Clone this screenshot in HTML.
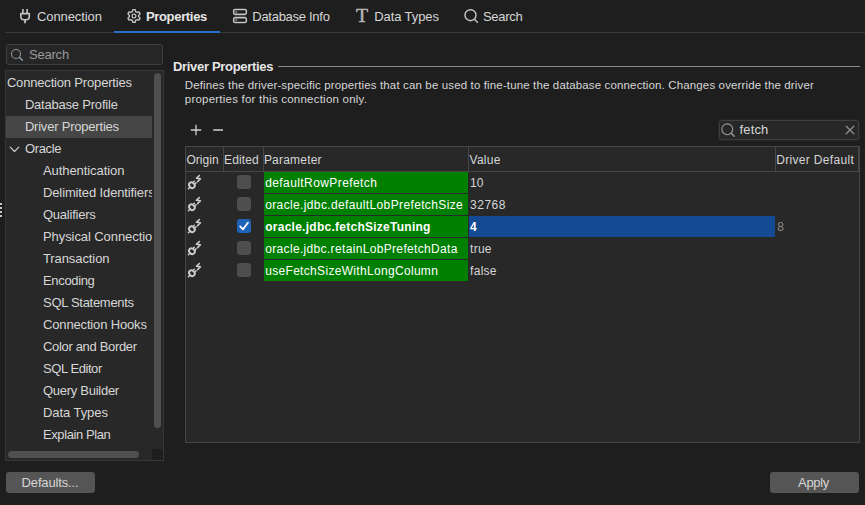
<!DOCTYPE html>
<html lang="en"><head><meta charset="utf-8"><title>Driver Properties</title>
<style>
html,body{margin:0;padding:0;background:#1e1e1e;}
body{width:865px;height:505px;position:relative;overflow:hidden;font-family:"Liberation Sans",sans-serif;}
.t{position:absolute;white-space:pre;line-height:16px;height:16px;}
.b{position:absolute;box-sizing:border-box;}
svg{position:absolute;overflow:visible;}
</style></head><body>
<!-- tab bar -->
<div class="b" style="left:5px;top:32px;width:860px;height:1px;background:#3a3a3a"></div>
<div class="b" style="left:114px;top:31px;width:106px;height:2px;background:#2472c8"></div>
<!-- left search -->
<div class="b" style="left:6px;top:44px;width:157px;height:21px;border:1px solid #3f3f3f;border-radius:3px;background:#262626"></div>
<!-- tree -->
<div class="b" style="left:5px;top:70px;width:159px;height:391px;border:1px solid #363636;background:#282828"></div>
<div class="b" style="left:6px;top:116px;width:146px;height:22px;background:#464646"></div>
<div class="b" style="left:154px;top:73px;width:7px;height:355px;border-radius:3.5px;background:#4f4f4f"></div>
<div class="b" style="left:8px;top:451px;width:131px;height:7px;border-radius:3.5px;background:#4f4f4f"></div>
<div class="b" style="left:152px;top:449px;width:11px;height:11px;background:#1e1e1e"></div>
<!-- sash -->
<div class="b" style="left:0;top:203px;width:2px;height:2px;background:#c8c8c8"></div>
<div class="b" style="left:0;top:207px;width:2px;height:2px;background:#c8c8c8"></div>
<div class="b" style="left:0;top:211px;width:2px;height:2px;background:#c8c8c8"></div>
<div class="b" style="left:0;top:215px;width:2px;height:2px;background:#c8c8c8"></div>
<!-- heading line -->
<div class="b" style="left:278px;top:66px;width:582px;height:1px;background:#8a8a8a"></div>
<!-- filter box -->
<div class="b" style="left:718px;top:119px;width:142px;height:22px;background:#252525"></div>
<div class="b" style="left:719px;top:120px;width:140px;height:20px;border:1px solid #3f3f3f;border-radius:3px;background:#272727"></div>
<!-- table -->
<div class="b" style="left:185px;top:146px;width:675px;height:297px;border:1px solid #464646;background:#282828"></div>
<div class="b" style="left:186px;top:171px;width:673px;height:1px;background:#464646"></div>
<div class="b" style="left:223px;top:147px;width:1px;height:24px;background:#464646"></div>
<div class="b" style="left:263px;top:147px;width:1px;height:24px;background:#464646"></div>
<div class="b" style="left:468px;top:147px;width:1px;height:24px;background:#464646"></div>
<div class="b" style="left:775px;top:147px;width:1px;height:24px;background:#464646"></div>
<div class="b" style="left:858px;top:147px;width:1px;height:24px;background:#464646"></div>
<!-- green cells -->
<div class="b" style="left:264px;top:172px;width:204px;height:109px;background:#262a26"></div>
<div class="b" style="left:264px;top:172px;width:204px;height:21px;background:#008000"></div>
<div class="b" style="left:264px;top:194px;width:204px;height:21px;background:#008000"></div>
<div class="b" style="left:264px;top:216px;width:204px;height:21px;background:#008000"></div>
<div class="b" style="left:264px;top:238px;width:204px;height:21px;background:#008000"></div>
<div class="b" style="left:264px;top:260px;width:204px;height:21px;background:#008000"></div>
<!-- blue selection -->
<div class="b" style="left:469px;top:216px;width:306px;height:21px;background:#144a94"></div>
<!-- checkboxes -->
<div class="b" style="left:237px;top:175px;width:14px;height:14px;border-radius:3px;background:#4e4e4e"></div>
<div class="b" style="left:237px;top:197px;width:14px;height:14px;border-radius:3px;background:#4e4e4e"></div>
<div class="b" style="left:237px;top:219px;width:14px;height:14px;border-radius:3px;background:#1f63b8"></div>
<div class="b" style="left:237px;top:241px;width:14px;height:14px;border-radius:3px;background:#4e4e4e"></div>
<div class="b" style="left:237px;top:263px;width:14px;height:14px;border-radius:3px;background:#4e4e4e"></div>
<svg style="left:237px;top:219px" width="14" height="14" viewBox="0 0 14 14"><path d="M3.2 7.4 L6 10.3 L10.9 3.7" fill="none" stroke="#fff" stroke-width="1.8" stroke-linecap="round" stroke-linejoin="round"/></svg>
<!-- buttons -->
<div class="b" style="left:6px;top:472px;width:89px;height:21px;border-radius:3px;background:#555555"></div>
<div class="b" style="left:770px;top:472px;width:89px;height:21px;border-radius:3px;background:#555555"></div>
<svg width="865" height="505" viewBox="0 0 865 505" style="left:0;top:0">
<g fill="none" stroke="#c4c4c4" stroke-width="1.6"><path d="M22.9 9 V13.4 M27.1 9 V13.4" /><path d="M20.8 13.6 H29.3 V16.2 Q29.3 19.7 26.2 19.7 H23.9 Q20.8 19.7 20.8 16.2 Z" stroke-linejoin="round"/><path d="M25.05 19.7 V23.2" stroke-width="1.8"/></g>
<path d="M132.38 11.54 L132.82 9.66 L135.18 9.66 L135.62 11.54 L137.05 12.36 L138.90 11.81 L140.08 13.85 L138.68 15.18 L138.68 16.82 L140.08 18.15 L138.90 20.19 L137.05 19.64 L135.62 20.46 L135.18 22.34 L132.82 22.34 L132.38 20.46 L130.95 19.64 L129.10 20.19 L127.92 18.15 L129.32 16.82 L129.32 15.18 L127.92 13.85 L129.10 11.81 L130.95 12.36Z" fill="none" stroke="#c4c4c4" stroke-width="1.4" stroke-linejoin="round"/><circle cx="134" cy="16" r="1.9" fill="none" stroke="#c4c4c4" stroke-width="1.2"/>
<rect x="234.5" y="15" width="11" height="2" fill="#484848"/><g fill="none" stroke="#c4c4c4" stroke-width="1.5"><rect x="233.65" y="9.55" width="12.7" height="4.8" rx="1.3"/><rect x="233.65" y="17.65" width="12.7" height="4.8" rx="1.3"/></g><rect x="235.2" y="11" width="2" height="2" fill="#777"/><rect x="235.2" y="19.1" width="2" height="2" fill="#777"/>
<g fill="none" stroke="#c4c4c4" stroke-width="1.4" stroke-linecap="round"><circle cx="470.5" cy="15.2" r="5.5"/><path d="M474.6 19.4 L477.4 22.2"/></g>
<g fill="none" stroke="#8c959c" stroke-width="1.1" stroke-linecap="round"><circle cx="16" cy="54" r="4.5"/><path d="M19.4 57.4 L22.4 60.3" stroke-width="1.5"/></g>
<path d="M10.2 147.2 L14.5 151.5 L18.8 147.2" fill="none" stroke="#d0d0d0" stroke-width="1.1" stroke-linecap="round" stroke-linejoin="round"/>
<path d="M190.8 130 H201.2 M196 124.8 V135.2 M213.2 130 H223" fill="none" stroke="#d0d0d0" stroke-width="1.3"/>
<g fill="none" stroke="#9a9a9a" stroke-width="1.1" stroke-linecap="round"><circle cx="727.3" cy="129.3" r="5.4"/><path d="M731.2 133.3 L734.2 136.3" stroke-width="1.4"/><path d="M846.2 126.2 L853.8 133.8 M853.8 126.2 L846.2 133.8" stroke-width="1.25" stroke="#909090"/></g>
<g transform="translate(0 0)" fill="none" stroke="#cccccc" stroke-linecap="round" stroke-linejoin="round"><ellipse cx="191.9" cy="185.2" rx="2.5" ry="3.1" transform="rotate(-45 191.9 185.2)" stroke-width="1.9"/><path d="M188.4 188.7 L189.6 187.5 M193.2 182.3 L194.3 181.2 M194.9 184 L196 182.9" stroke-width="1.5"/><path d="M199.4 175.5 L196.4 178.3 L200.4 178.8 L197.6 181.6" stroke-width="1.6"/></g>
<g transform="translate(0 22)" fill="none" stroke="#cccccc" stroke-linecap="round" stroke-linejoin="round"><ellipse cx="191.9" cy="185.2" rx="2.5" ry="3.1" transform="rotate(-45 191.9 185.2)" stroke-width="1.9"/><path d="M188.4 188.7 L189.6 187.5 M193.2 182.3 L194.3 181.2 M194.9 184 L196 182.9" stroke-width="1.5"/><path d="M199.4 175.5 L196.4 178.3 L200.4 178.8 L197.6 181.6" stroke-width="1.6"/></g>
<g transform="translate(0 44)" fill="none" stroke="#cccccc" stroke-linecap="round" stroke-linejoin="round"><ellipse cx="191.9" cy="185.2" rx="2.5" ry="3.1" transform="rotate(-45 191.9 185.2)" stroke-width="1.9"/><path d="M188.4 188.7 L189.6 187.5 M193.2 182.3 L194.3 181.2 M194.9 184 L196 182.9" stroke-width="1.5"/><path d="M199.4 175.5 L196.4 178.3 L200.4 178.8 L197.6 181.6" stroke-width="1.6"/></g>
<g transform="translate(0 66)" fill="none" stroke="#cccccc" stroke-linecap="round" stroke-linejoin="round"><ellipse cx="191.9" cy="185.2" rx="2.5" ry="3.1" transform="rotate(-45 191.9 185.2)" stroke-width="1.9"/><path d="M188.4 188.7 L189.6 187.5 M193.2 182.3 L194.3 181.2 M194.9 184 L196 182.9" stroke-width="1.5"/><path d="M199.4 175.5 L196.4 178.3 L200.4 178.8 L197.6 181.6" stroke-width="1.6"/></g>
<g transform="translate(0 88)" fill="none" stroke="#cccccc" stroke-linecap="round" stroke-linejoin="round"><ellipse cx="191.9" cy="185.2" rx="2.5" ry="3.1" transform="rotate(-45 191.9 185.2)" stroke-width="1.9"/><path d="M188.4 188.7 L189.6 187.5 M193.2 182.3 L194.3 181.2 M194.9 184 L196 182.9" stroke-width="1.5"/><path d="M199.4 175.5 L196.4 178.3 L200.4 178.8 L197.6 181.6" stroke-width="1.6"/></g>
</svg>
<span class="t" style="left:355.7px;top:4.9px;transform:scaleX(1.07);transform-origin:0 0;font-family:'Liberation Serif',serif;font-size:18.5px;line-height:22px;height:22px;color:#b8b8b8;-webkit-text-stroke:0.4px #b8b8b8">T</span>
<span class="t" style="left:37.0px;top:8.70px;font-size:13px;letter-spacing:-0.098px;color:#d6d6d6;">Connection</span>
<span class="t" style="left:145.9px;top:8.70px;font-size:13px;letter-spacing:-0.321px;color:#e6e6e6;font-weight:700;">Properties</span>
<span class="t" style="left:252.3px;top:8.70px;font-size:13px;letter-spacing:-0.281px;color:#d6d6d6;">Database Info</span>
<span class="t" style="left:374.2px;top:8.70px;font-size:13px;letter-spacing:-0.083px;color:#d6d6d6;">Data Types</span>
<span class="t" style="left:483.0px;top:8.70px;font-size:13px;letter-spacing:-0.301px;color:#d6d6d6;">Search</span>
<span class="t" style="left:29.1px;top:46.70px;font-size:13px;letter-spacing:-0.234px;color:#9a9a9a;">Search</span>
<span class="t" style="left:6.9px;top:75.20px;font-size:13px;letter-spacing:-0.173px;color:#d6d6d6;">Connection Properties</span>
<span class="t" style="left:24.9px;top:97.20px;font-size:13px;letter-spacing:-0.208px;color:#d6d6d6;">Database Profile</span>
<span class="t" style="left:24.9px;top:119.20px;font-size:13px;letter-spacing:-0.208px;color:#d6d6d6;">Driver Properties</span>
<span class="t" style="left:24.9px;top:141.20px;font-size:13px;letter-spacing:-0.316px;color:#d6d6d6;">Oracle</span>
<span class="t" style="left:43.0px;top:163.20px;font-size:13px;letter-spacing:-0.079px;color:#d6d6d6;">Authentication</span>
<span class="t" style="left:43.0px;top:185.20px;font-size:13px;letter-spacing:-0.126px;color:#d6d6d6;width:108.6px;overflow:hidden;">Delimited Identifiers</span>
<span class="t" style="left:43.0px;top:207.20px;font-size:13px;letter-spacing:-0.242px;color:#d6d6d6;">Qualifiers</span>
<span class="t" style="left:43.0px;top:229.20px;font-size:13px;letter-spacing:-0.079px;color:#d6d6d6;width:108.6px;overflow:hidden;">Physical Connection</span>
<span class="t" style="left:43.0px;top:251.20px;font-size:13px;letter-spacing:-0.094px;color:#d6d6d6;">Transaction</span>
<span class="t" style="left:43.0px;top:273.20px;font-size:13px;letter-spacing:-0.340px;color:#d6d6d6;">Encoding</span>
<span class="t" style="left:43.0px;top:295.20px;font-size:13px;letter-spacing:-0.293px;color:#d6d6d6;">SQL Statements</span>
<span class="t" style="left:43.0px;top:317.20px;font-size:13px;letter-spacing:-0.152px;color:#d6d6d6;">Connection Hooks</span>
<span class="t" style="left:43.0px;top:339.20px;font-size:13px;letter-spacing:-0.331px;color:#d6d6d6;">Color and Border</span>
<span class="t" style="left:43.0px;top:361.20px;font-size:13px;letter-spacing:-0.431px;color:#d6d6d6;">SQL Editor</span>
<span class="t" style="left:43.0px;top:383.20px;font-size:13px;letter-spacing:-0.276px;color:#d6d6d6;">Query Builder</span>
<span class="t" style="left:43.0px;top:405.20px;font-size:13px;letter-spacing:-0.063px;color:#d6d6d6;">Data Types</span>
<span class="t" style="left:43.0px;top:427.20px;font-size:13px;letter-spacing:-0.407px;color:#d6d6d6;">Explain Plan</span>
<span class="t" style="left:172.9px;top:58.70px;font-size:13px;letter-spacing:-0.306px;color:#e6e6e6;font-weight:700;">Driver Properties</span>
<span class="t" style="left:184.8px;top:77.32px;font-size:11.5px;letter-spacing:0.138px;color:#d6d6d6;">Defines the driver-specific properties that can be used to fine-tune the database connection. Changes override the driver</span>
<span class="t" style="left:184.8px;top:90.92px;font-size:11.5px;letter-spacing:0.222px;color:#d6d6d6;">properties for this connection only.</span>
<span class="t" style="left:739.5px;top:121.70px;font-size:13px;letter-spacing:0.143px;color:#d6d6d6;">fetch</span>
<span class="t" style="left:186.5px;top:151.74px;font-size:12px;letter-spacing:0.014px;color:#d6d6d6;">Origin</span>
<span class="t" style="left:224.1px;top:151.74px;font-size:12px;letter-spacing:0.128px;color:#d6d6d6;">Edited</span>
<span class="t" style="left:263.9px;top:151.74px;font-size:12px;letter-spacing:0.208px;color:#d6d6d6;">Parameter</span>
<span class="t" style="left:469.6px;top:151.74px;font-size:12px;letter-spacing:0.237px;color:#d6d6d6;">Value</span>
<span class="t" style="left:776.2px;top:151.74px;font-size:12px;letter-spacing:0.331px;color:#d6d6d6;">Driver Default</span>
<span class="t" style="left:265.2px;top:175.24px;font-size:12px;letter-spacing:0.409px;color:#ffffff;">defaultRowPrefetch</span>
<span class="t" style="left:265.2px;top:197.24px;font-size:12px;letter-spacing:0.366px;color:#ffffff;">oracle.jdbc.defaultLobPrefetchSize</span>
<span class="t" style="left:265.2px;top:219.24px;font-size:12px;letter-spacing:0.260px;color:#ffffff;font-weight:700;">oracle.jdbc.fetchSizeTuning</span>
<span class="t" style="left:265.2px;top:241.24px;font-size:12px;letter-spacing:0.338px;color:#ffffff;">oracle.jdbc.retainLobPrefetchData</span>
<span class="t" style="left:265.2px;top:263.24px;font-size:12px;letter-spacing:0.317px;color:#ffffff;">useFetchSizeWithLongColumn</span>
<span class="t" style="left:470.1px;top:175.24px;font-size:12px;letter-spacing:-0.130px;color:#d6d6d6;">10</span>
<span class="t" style="left:470.1px;top:197.24px;font-size:12px;letter-spacing:0.485px;color:#d6d6d6;">32768</span>
<span class="t" style="left:470.1px;top:219.24px;font-size:12px;letter-spacing:0.312px;color:#ffffff;font-weight:700;">4</span>
<span class="t" style="left:470.1px;top:241.24px;font-size:12px;letter-spacing:0.253px;color:#d6d6d6;">true</span>
<span class="t" style="left:470.1px;top:263.24px;font-size:12px;letter-spacing:0.268px;color:#d6d6d6;">false</span>
<span class="t" style="left:777.2px;top:219.24px;font-size:12px;letter-spacing:-0.288px;color:#8a8a8a;">8</span>
<span class="t" style="left:21.6px;top:474.50px;font-size:13px;letter-spacing:-0.157px;color:#d6d6d6;">Defaults...</span>
<span class="t" style="left:798.1px;top:474.50px;font-size:13px;letter-spacing:-0.326px;color:#d6d6d6;">Apply</span>
</body></html>
